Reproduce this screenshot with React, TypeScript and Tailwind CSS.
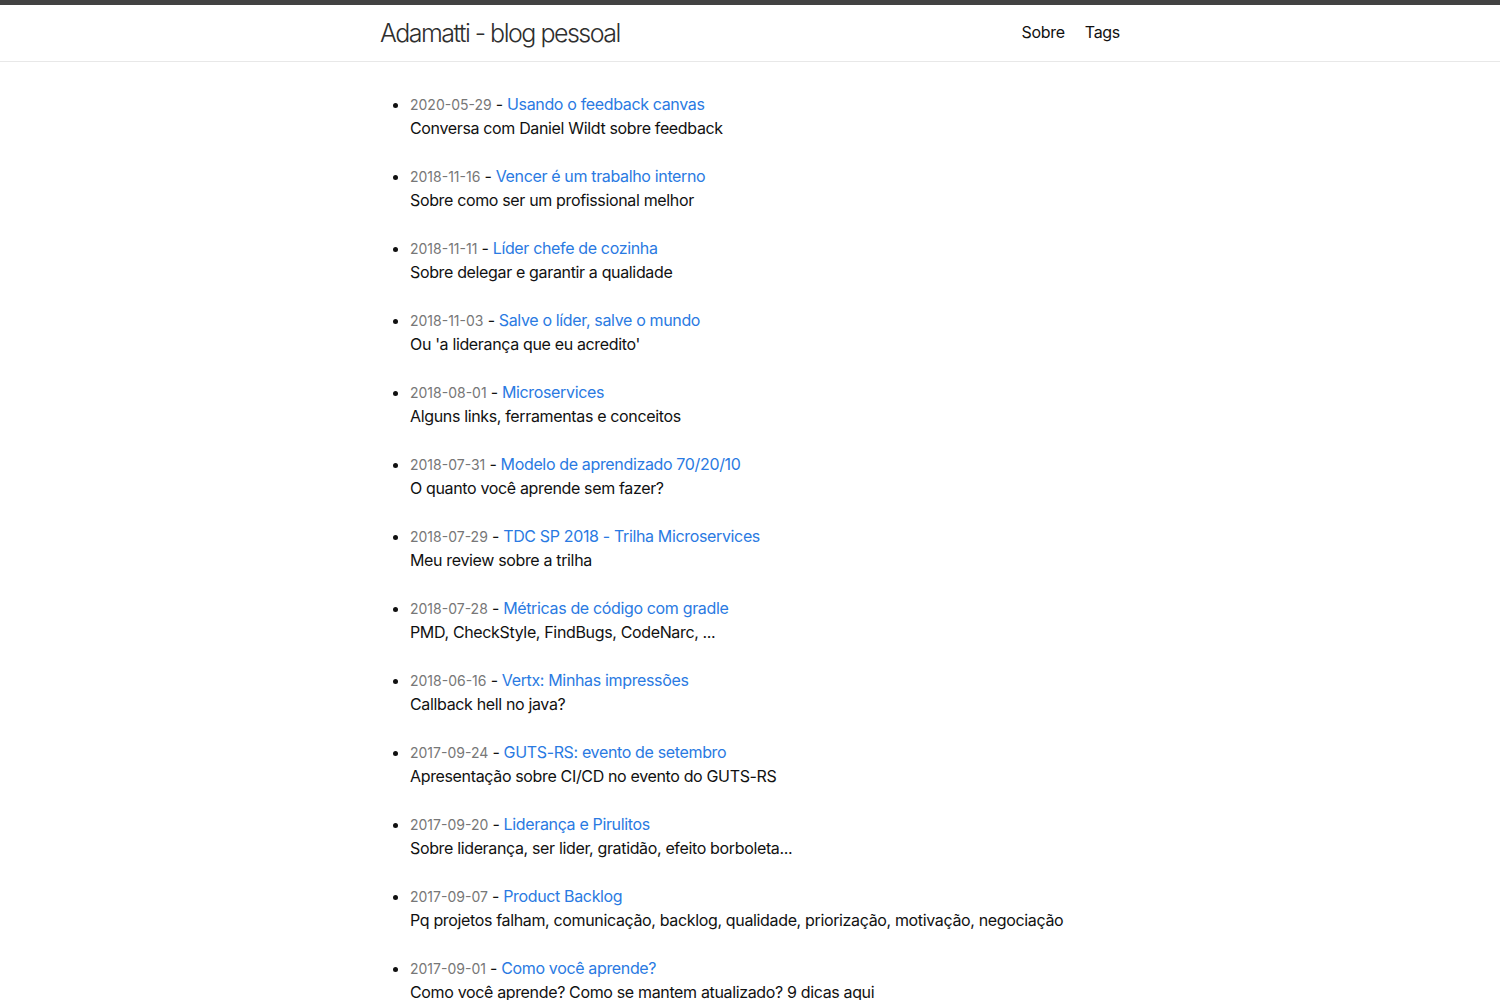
const posts = [
  { date: '2020-05-29', title: 'Usando o feedback canvas', excerpt: 'Conversa com Daniel Wildt sobre feedback' },
  { date: '2018-11-16', title: 'Vencer é um trabalho interno', excerpt: 'Sobre como ser um profissional melhor' },
  { date: '2018-11-11', title: 'Líder chefe de cozinha', excerpt: 'Sobre delegar e garantir a qualidade' },
  { date: '2018-11-03', title: 'Salve o líder, salve o mundo', excerpt: "Ou 'a liderança que eu acredito'" },
  { date: '2018-08-01', title: 'Microservices', excerpt: 'Alguns links, ferramentas e conceitos' },
  { date: '2018-07-31', title: 'Modelo de aprendizado 70/20/10', excerpt: 'O quanto você aprende sem fazer?' },
  { date: '2018-07-29', title: 'TDC SP 2018 - Trilha Microservices', excerpt: 'Meu review sobre a trilha' },
  { date: '2018-07-28', title: 'Métricas de código com gradle', excerpt: 'PMD, CheckStyle, FindBugs, CodeNarc, ...' },
  { date: '2018-06-16', title: 'Vertx: Minhas impressões', excerpt: 'Callback hell no java?' },
  { date: '2017-09-24', title: 'GUTS-RS: evento de setembro', excerpt: 'Apresentação sobre CI/CD no evento do GUTS-RS' },
  { date: '2017-09-20', title: 'Liderança e Pirulitos', excerpt: 'Sobre liderança, ser lider, gratidão, efeito borboleta...' },
  { date: '2017-09-07', title: 'Product Backlog', excerpt: 'Pq projetos falham, comunicação, backlog, qualidade, priorização, motivação, negociação' },
  { date: '2017-09-01', title: 'Como você aprende?', excerpt: 'Como você aprende? Como se mantem atualizado? 9 dicas aqui' },
];

export default function App() {
  return (
    <div className="min-h-screen bg-white font-['Inter','Helvetica',sans-serif] text-[#111]">
      <header className="border-t-[5px] border-t-[#424242] border-b border-b-[#e8e8e8]">
        <div className="mx-auto flex h-[56px] w-[740px] items-center justify-between">
          <a className="pt-[2px] text-[25px] font-light tracking-[-1.5px] text-[#2f2f2f]">Adamatti - blog pessoal</a>
          <nav className="flex gap-5 pb-[3px] text-[16px] tracking-[-0.3px] text-[#111]">
            <a>Sobre</a>
            <a>Tags</a>
          </nav>
        </div>
      </header>

      <main className="mx-auto w-[740px] pt-[30px]">
        <ul className="ml-[30px] list-disc space-y-6 text-[16px] leading-6 tracking-[-0.35px] marker:text-[#111]">
          {posts.map((p) => (
            <li key={p.date + p.title}>
              <span className="text-[14px] leading-none tracking-normal text-[#777]">{p.date}</span>
              <span> - </span>
              <a className="text-[#2a7ae2]">{p.title}</a>
              <div>{p.excerpt}</div>
            </li>
          ))}
        </ul>
      </main>
    </div>
  );
}
